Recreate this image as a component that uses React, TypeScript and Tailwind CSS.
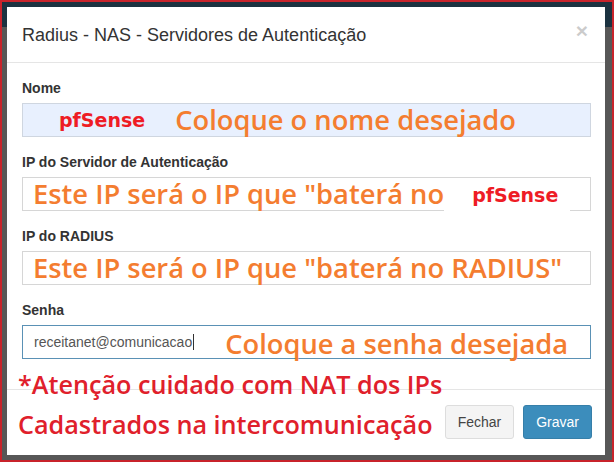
import React from "react";

const note = "font-['Open_Sans',sans-serif] text-[#f47d30] font-semibold text-[27.3px]";
const pfs = "font-['DejaVu_Sans',sans-serif] font-bold text-[#ee1c25] text-[19px]";

function Label({ children }: { children: React.ReactNode }) {
  return (
    <div className="mb-[5px] text-[14px] leading-[20px] font-bold text-[#333]">{children}</div>
  );
}

export default function App() {
  return (
    <div className="w-[614px] h-[462px] overflow-hidden border-2 border-[#c8232b] bg-[linear-gradient(to_bottom,#1b3240_25px,#575757_25px)] font-['Liberation_Sans',Arial,sans-serif]">
      <div className="mt-[5px] ml-[5px] w-[598px] h-[448px] bg-white">
        {/* header */}
        <div className="flex items-center justify-between px-[15px] h-[56px] border-b border-[#e5e5e5]">
          <h4 className="text-[18px] leading-[26px] text-[#333]">
            Radius - NAS - Servidores de Autenticação
          </h4>
          <span className="text-[21px] font-bold leading-none text-black opacity-20 -mt-[8px] mr-[2px]">×</span>
        </div>

        {/* body */}
        <div className="px-[15px] pt-[15px] pb-[15px]">
          <div className="mb-[15px]">
            <Label>Nome</Label>
            <div className="flex items-center h-[34px] w-[569px] bg-[#e8f0fe] border border-[#cfd6e0] pl-[36px] whitespace-nowrap">
              <span className={pfs}>pfSense</span>
              <span className={`${note} ml-[30px]`}>Coloque o nome desejado</span>
            </div>
          </div>

          <div className="mb-[15px]">
            <Label>IP do Servidor de Autenticação</Label>
            <div className="flex items-center h-[34px] w-[569px] bg-white border border-[#d6d6d6] pl-[10px] whitespace-nowrap">
              <span className={note}>Este IP será o IP que "baterá no</span>
              <span className={`${pfs} relative top-px h-[34px] leading-[34px] bg-white pl-[28px] pr-[12px]`}>pfSense</span>
            </div>
          </div>

          <div className="mb-[15px]">
            <Label>IP do RADIUS</Label>
            <div className="flex items-center h-[34px] w-[569px] bg-white border border-[#d6d6d6] pl-[10px] whitespace-nowrap">
              <span className={note}>Este IP será o IP que "baterá no RADIUS"</span>
            </div>
          </div>

          <div className="mb-[15px]">
            <Label>Senha</Label>
            <div className="flex items-center h-[34px] w-[569px] bg-white border border-[#5a91b5] pl-[11px] whitespace-nowrap">
              <span className="text-[14px] text-[#555]">receitanet@comunicacao</span>
              <span className="w-px h-[16px] bg-[#333] ml-px" />
              <span className={`${note} ml-[31px] relative top-[2px]`}>Coloque a senha desejada</span>
            </div>
          </div>
        </div>

        {/* footer */}
        <div className="flex items-start justify-between border-t border-[#e5e5e5] p-[15px]">
          <div className="w-[400px] -mt-[41px] -mb-[6px] -ml-[4px] font-['Open_Sans',sans-serif] font-semibold text-[#e0202b] text-[25.2px] leading-[40px] whitespace-nowrap">
            <div>*Atenção cuidado com NAT dos IPs</div>
            <div>Cadastrados na intercomunicação</div>
          </div>
          <div className="flex gap-[9px] mr-[-2px]">
            <button className="h-[34px] px-[12px] text-[14px] text-[#444] bg-[#f4f4f4] border border-[#ddd] rounded-[3px]">
              Fechar
            </button>
            <button className="h-[34px] px-[12px] text-[14px] text-white bg-[#3c8dbc] border border-[#367fa9] rounded-[3px]">
              Gravar
            </button>
          </div>
        </div>
      </div>
    </div>
  );
}
